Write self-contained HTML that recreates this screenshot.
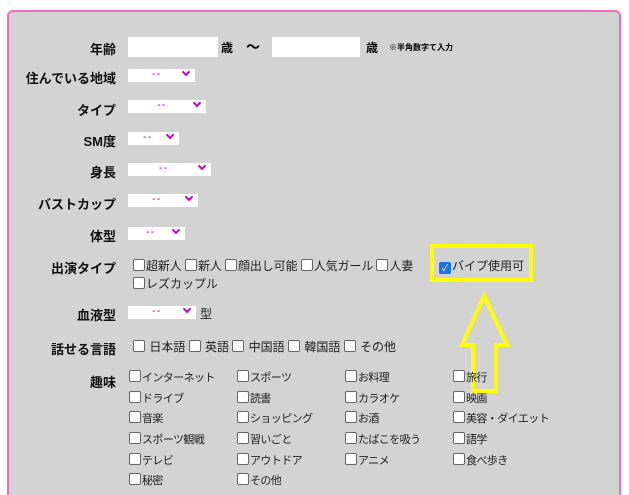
<!DOCTYPE html>
<html style="height:495px;overflow:hidden"><head><meta charset="utf-8"><style>
body{margin:0;width:629px;height:495px;background:#fff;position:relative;overflow:hidden;font-family:"Liberation Sans","Noto Sans CJK JP",sans-serif;}
.panel{position:absolute;left:7px;top:10px;width:610px;height:483px;background:#d3d3d3;border:2px solid #f06cc0;border-bottom:none;border-radius:6px 6px 0 0;}
.a{position:absolute;white-space:nowrap;}
.lb{position:absolute;right:513px;font-size:13px;font-weight:bold;color:#111;white-space:nowrap;}
.in{position:absolute;background:#fff;}
.sel{position:absolute;background:#fff;height:13px;}
.sel i{position:absolute;font-style:normal;color:#c800c8;font-size:11px;top:-1px;letter-spacing:1px;}
.sel b{position:absolute;right:6px;top:0px;width:4px;height:4px;border-right:2px solid #c800c8;border-bottom:2px solid #c800c8;transform:rotate(45deg);}
.cb{display:inline-block;width:10px;height:10px;border:1px solid #666;border-radius:2px;background:#fff;vertical-align:-1px;margin-right:1px;}
.t{font-size:12px;color:#222;}
.h{position:absolute;font-size:11px;letter-spacing:-0.6px;color:#222;white-space:nowrap;}
</style></head><body>
<div class="panel"></div>
<div class="lb" style="top:39px">年齢</div>
<div class="in" style="left:128px;top:37px;width:90px;height:20px"></div>
<div class="a" style="left:221px;top:39px;font-size:12px;font-weight:bold">歳</div>
<div class="a" style="left:246px;top:37px;font-size:14px;font-weight:bold">〜</div>
<div class="in" style="left:272px;top:37px;width:88px;height:20px"></div>
<div class="a" style="left:366px;top:39px;font-size:12px;font-weight:bold">歳</div>
<div class="a" style="left:389px;top:42px;font-size:8px;font-weight:bold">※半角数字て入力</div>

<div class="lb" style="top:68px">住んでいる地域</div>
<div class="sel" style="left:128px;top:69px;width:67px"><i style="left:24px">--</i><b></b></div>
<div class="lb" style="top:100px">タイプ</div>
<div class="sel" style="left:128px;top:100px;width:78px"><i style="left:29px">--</i><b></b></div>
<div class="lb" style="top:131px">SM度</div>
<div class="sel" style="left:128px;top:132px;width:51px"><i style="left:15px">--</i><b></b></div>
<div class="lb" style="top:162px">身長</div>
<div class="sel" style="left:128px;top:163px;width:83px"><i style="left:31px">--</i><b></b></div>
<div class="lb" style="top:194px">バストカップ</div>
<div class="sel" style="left:128px;top:194px;width:70px"><i style="left:24px">--</i><b></b></div>
<div class="lb" style="top:226px">体型</div>
<div class="sel" style="left:128px;top:227px;width:57px"><i style="left:18px">--</i><b></b></div>

<div class="lb" style="top:258px">出演タイプ</div>
<div class="a t" style="left:133px;top:257px;letter-spacing:-0.1px"><span class="cb"></span>超新人 <span class="cb"></span>新人 <span class="cb"></span>顔出し可能 <span class="cb"></span>人気ガール <span class="cb"></span>人妻</div>
<div class="a t" style="left:439px;top:257px"><span class="cb" style="background:#1a73e8;border-color:#1a73e8;color:#fff;font-size:9px;line-height:10px;text-align:center">✓</span>バイプ使用可</div>
<div class="a t" style="left:133px;top:275px"><span class="cb"></span>レズカップル</div>
<div class="a" style="left:430px;top:244px;width:95px;height:30px;border:4px solid #ffff00"></div>
<svg class="a" style="left:455px;top:290px" width="60" height="105"><path d="M29 6 L52 55 L41 55 L41 101 L18 101 L18 55 L7 55 Z" fill="none" stroke="#ffff00" stroke-width="4"/></svg>

<div class="lb" style="top:305px">血液型</div>
<div class="sel" style="left:128px;top:306px;width:68px"><i style="left:24px">--</i><b></b></div>
<div class="a t" style="left:200px;top:305px">型</div>

<div class="lb" style="top:339px">話せる言語</div>
<div class="a t" style="left:133px;top:338px"><span class="cb"></span> 日本語 <span class="cb"></span> 英語 <span class="cb"></span> 中国語 <span class="cb"></span> 韓国語 <span class="cb"></span> その他</div>

<div class="lb" style="top:372px">趣味</div>
<div class="h" style="left:129px;top:369px"><span class="cb"></span>インターネット</div>
<div class="h" style="left:237px;top:369px"><span class="cb"></span>スポーツ</div>
<div class="h" style="left:345px;top:369px"><span class="cb"></span>お料理</div>
<div class="h" style="left:453px;top:369px"><span class="cb"></span>旅行</div>
<div class="h" style="left:129px;top:390px"><span class="cb"></span>ドライブ</div>
<div class="h" style="left:237px;top:390px"><span class="cb"></span>読書</div>
<div class="h" style="left:345px;top:390px"><span class="cb"></span>カラオケ</div>
<div class="h" style="left:453px;top:390px"><span class="cb"></span>映画</div>
<div class="h" style="left:129px;top:410px"><span class="cb"></span>音楽</div>
<div class="h" style="left:237px;top:410px"><span class="cb"></span>ショッピング</div>
<div class="h" style="left:345px;top:410px"><span class="cb"></span>お酒</div>
<div class="h" style="left:453px;top:410px"><span class="cb"></span>美容・ダイエット</div>
<div class="h" style="left:129px;top:431px"><span class="cb"></span>スポーツ観戦</div>
<div class="h" style="left:237px;top:431px"><span class="cb"></span>習いごと</div>
<div class="h" style="left:345px;top:431px"><span class="cb"></span>たばこを吸う</div>
<div class="h" style="left:453px;top:431px"><span class="cb"></span>語学</div>
<div class="h" style="left:129px;top:452px"><span class="cb"></span>テレビ</div>
<div class="h" style="left:237px;top:452px"><span class="cb"></span>アウトドア</div>
<div class="h" style="left:345px;top:452px"><span class="cb"></span>アニメ</div>
<div class="h" style="left:453px;top:452px"><span class="cb"></span>食べ歩き</div>
<div class="h" style="left:129px;top:472px"><span class="cb"></span>秘密</div>
<div class="h" style="left:237px;top:472px"><span class="cb"></span>その他</div>
</body></html>
